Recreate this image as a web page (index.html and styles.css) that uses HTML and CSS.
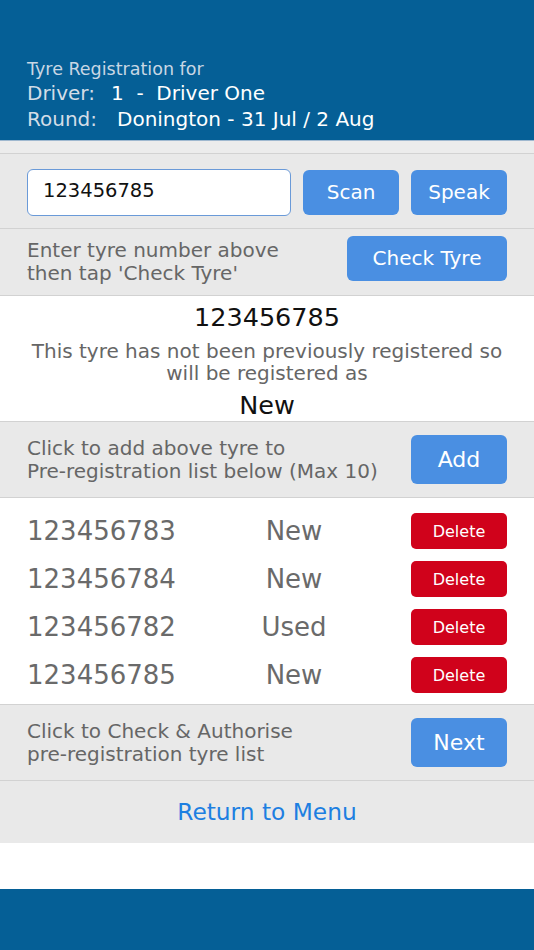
FILE: index.html
```html
<!DOCTYPE html>
<html lang="en">
<head>
    <meta charset="UTF-8">
    <meta name="viewport" content="width=device-width, initial-scale=1.0">
    <title>Tyre Registration</title>
    <link rel="stylesheet" href="styles.css">
</head>
<body>
    <div class="header">
        <div class="header-title">Tyre Registration for</div>
        <div class="header-line"><span class="label">Driver:</span><span class="value">1&nbsp; - &nbsp;Driver One</span></div>
        <div class="header-line"><span class="label">Round:</span><span class="value round">Donington - 31 Jul / 2 Aug</span></div>
    </div>
    <div class="strip"></div>

    <div class="row entry">
        <input class="tyre-input" type="text" value="123456785">
        <button class="btn">Scan</button>
        <button class="btn">Speak</button>
    </div>

    <div class="row hint">
        <div class="hint-text">Enter tyre number above<br>then tap 'Check Tyre'</div>
        <button class="btn wide">Check Tyre</button>
    </div>

    <div class="result">
        <div class="result-number">123456785</div>
        <div class="result-text">This tyre has not been previously registered so<br>will be registered as</div>
        <div class="result-status">New</div>
    </div>

    <div class="row action">
        <div class="hint-text">Click to add above tyre to<br>Pre-registration list below (Max 10)</div>
        <button class="btn tall">Add</button>
    </div>

    <div class="list">
        <div class="list-row">
            <span class="tyre-no">123456783</span>
            <span class="tyre-state">New</span>
            <button class="btn-delete">Delete</button>
        </div>
        <div class="list-row">
            <span class="tyre-no">123456784</span>
            <span class="tyre-state">New</span>
            <button class="btn-delete">Delete</button>
        </div>
        <div class="list-row">
            <span class="tyre-no">123456782</span>
            <span class="tyre-state">Used</span>
            <button class="btn-delete">Delete</button>
        </div>
        <div class="list-row">
            <span class="tyre-no">123456785</span>
            <span class="tyre-state">New</span>
            <button class="btn-delete">Delete</button>
        </div>
    </div>

    <div class="row action">
        <div class="hint-text">Click to Check &amp; Authorise<br>pre-registration tyre list</div>
        <button class="btn tall">Next</button>
    </div>

    <div class="menu-link">Return to Menu</div>
    <div class="spacer"></div>
    <div class="footer"></div>
</body>
</html>
```

FILE: styles.css
```css
body {
    margin: 0;
    font-family: "DejaVu Sans", Roboto, sans-serif;
    background-color: white;
}
.header {
    background-color: #055f96;
    height: 140px;
    box-sizing: border-box;
    padding: 58px 27px 0;
    color: white;
}
.header-title {
    font-size: 17.5px;
    line-height: 22px;
    color: #c9d7e4;
}
.header-line {
    font-size: 20px;
    line-height: 26px;
}
.label {
    display: inline-block;
    width: 84px;
    color: #d3dde7;
}
.round {
    margin-left: 6px;
}
.strip {
    height: 12px;
    background-color: #ececec;
    border-top: 1px solid #9fb8cf;
    border-bottom: 1px solid #d2d2d2;
}
.row {
    display: flex;
    align-items: center;
    background-color: #e9e9e9;
    padding: 0 27px;
    border-bottom: 1px solid #d2d2d2;
}
.entry {
    height: 72px;
    gap: 12px;
    padding-top: 2px;
}
.tyre-input {
    flex: 1;
    min-width: 0;
    height: 47px;
    box-sizing: border-box;
    border: 1px solid #6a9ad8;
    border-radius: 6px;
    padding: 0 15px 4px;
    font-family: inherit;
    font-size: 19.5px;
    color: #111;
    background: white;
    outline: none;
}
.btn {
    background-color: #4a8fe2;
    color: white;
    border: none;
    border-radius: 6px;
    width: 96px;
    height: 45px;
    font-family: inherit;
    font-size: 20px;
    padding: 0;
}
.btn.wide {
    width: 160px;
    margin-top: -8px;
}
.btn.tall {
    height: 49px;
    font-size: 22px;
}
.hint {
    height: 66px;
    justify-content: space-between;
}
.hint-text {
    flex: 1;
    font-size: 20px;
    line-height: 23px;
    color: #666;
}
.result {
    background: white;
    text-align: center;
    padding-top: 6px;
    height: 126px;
    box-sizing: border-box;
    border-bottom: 1px solid #d2d2d2;
}
.result-number, .result-status {
    font-size: 25.5px;
    line-height: 30px;
    color: #111;
}
.result-text {
    font-size: 20px;
    line-height: 22px;
    color: #666;
    margin: 8px 0 6px;
}
.action {
    height: 75px;
}
.list {
    padding: 9px 27px 5px;
    border-bottom: 1px solid #d2d2d2;
}
.list-row {
    display: grid;
    grid-template-columns: 200px 134px 1fr;
    align-items: center;
    height: 48px;
}
.tyre-no {
    font-size: 26px;
    color: #6a6a6a;
}
.tyre-state {
    font-size: 26px;
    color: #6a6a6a;
    text-align: center;
}
.btn-delete {
    justify-self: end;
    width: 96px;
    height: 36px;
    background-color: #d0021b;
    color: white;
    border: none;
    border-radius: 5px;
    font-family: inherit;
    font-size: 16px;
    padding: 0;
}
.menu-link {
    background-color: #e9e9e9;
    height: 62px;
    line-height: 62px;
    text-align: center;
    font-size: 23.3px;
    color: #1d7fe1;
}
.spacer {
    height: 46px;
}
.footer {
    height: 61px;
    background-color: #055f96;
}
```
